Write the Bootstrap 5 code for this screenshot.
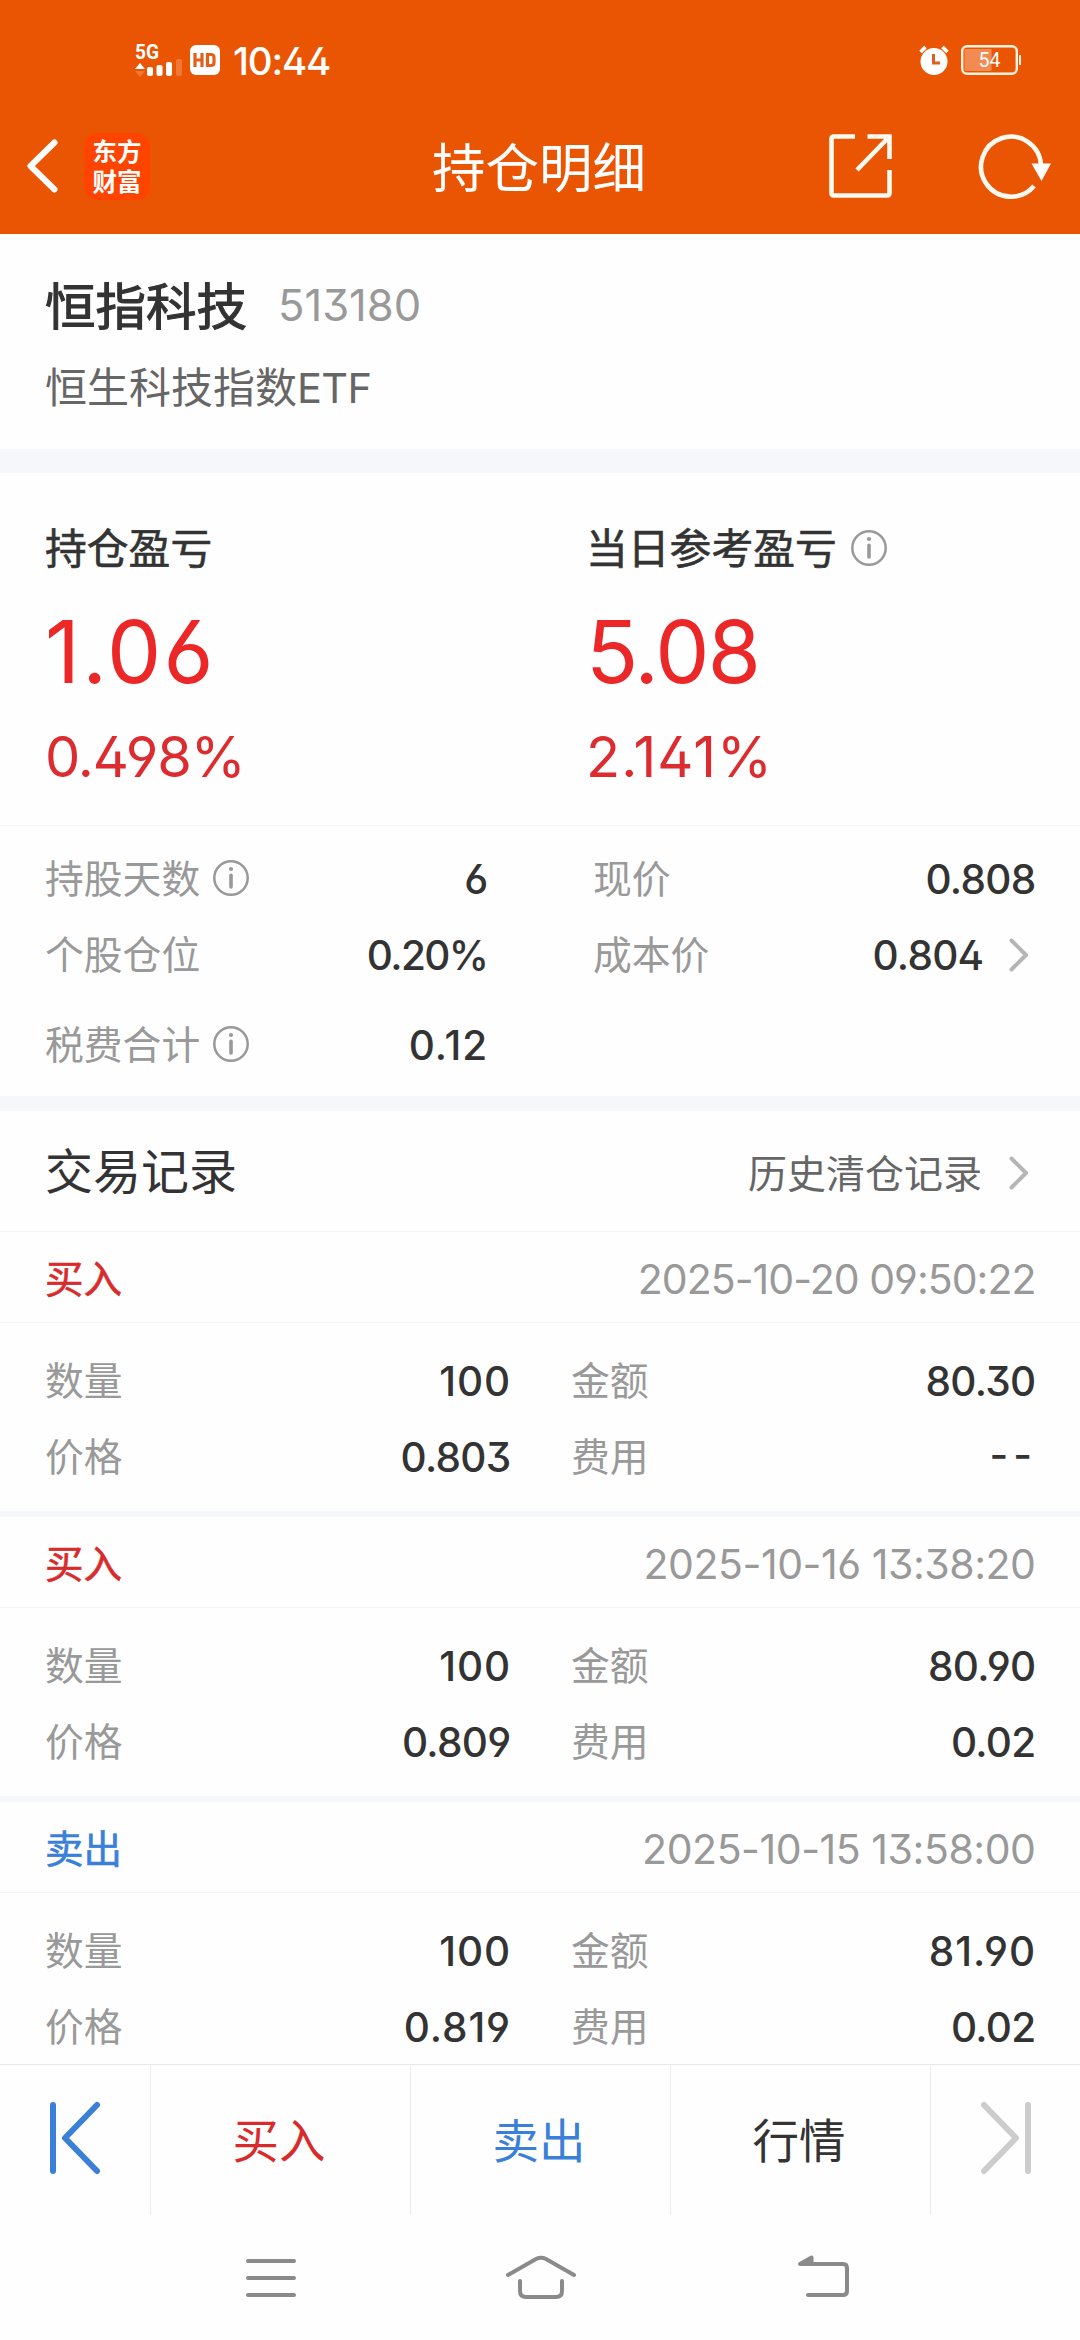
<!DOCTYPE html>
<html lang="zh-CN">
<head>
<meta charset="utf-8">
<meta name="viewport" content="width=device-width, initial-scale=1">
<title>持仓明细</title>
<link href="https://cdn.jsdelivr.net/npm/bootstrap@5.3.0/dist/css/bootstrap.min.css" rel="stylesheet">
<style>
  :root { --ink:#333; --mid:#666; --soft:#999; --up:#eb2727; --down:#3a80d8; --band:#f6f7fa; --hair:#f5f5f6; }
  body { font-family: Roboto, "Noto Sans CJK SC", sans-serif; color: var(--ink); background:#fefefe; line-height:1; overflow:hidden; }
  .screen { width:1080px; height:2340px; overflow:hidden; }
  svg { display:block; flex:none; overflow:visible; }
  .px-edge { padding-left:45px; padding-right:46px; }
  .clock, .latin, .stock-code, .profit-main, .profit-rate, .num, .stamp { font-family: Inter, Roboto, sans-serif; font-feature-settings:"cv03","cv04","ss01"; }
  .top { background:#ea5504; height:234px; color:#fff; }
  .statusbar { height:100px; padding:20px 59px 0 135px; }
  .clock { font-size:38.5px; font-weight:500; margin-left:13px; letter-spacing:-1.2px; padding-top:2px; }
  .battery { margin-left:12px; }
  .side-slot { flex:1 1 0; }
  .refresh { margin-left:87px; }
  .titlebar { height:134px; padding:0 28px 2px 26px; }
  .titlebar h1 { font-size:53.5px; font-weight:400; line-height:1; margin:0; padding-top:7px; }
  .brand-tile { width:66px; height:67px; border-radius:13px; background:#ff4400; font:700 24.5px/30px "Noto Sans CJK SC",sans-serif; margin-left:26px; padding-top:3px; }
  .stock { height:215px; padding-top:49px; }
  .stock-line { height:50px; }
  .stock-name { font-size:50.5px; -webkit-text-stroke:1.1px currentColor; }
  .stock-code { font-size:43.5px; color:var(--soft); margin-left:31px; letter-spacing:0; margin-top:-4px; }
  .stock-full { font-size:42px; color:var(--mid); height:63px; }
  .latin { font-size:41.5px; letter-spacing:-.6px; }
  .band { background:var(--band); height:24px; }
  .band-md { height:15px; }
  .band-sm { height:6px; }
  .hair { background:var(--hair); height:1px; }
  .profit { height:352px; padding-top:44px; }
  .w-left { width:541px; }
  .profit-label { font-size:41.8px; height:65px; -webkit-text-stroke:.6px currentColor; gap:14px; }
  .profit-label .info { margin-top:-4px; }
  .profit-main { font-size:86px; color:var(--up); height:90px; margin-top:25px; letter-spacing:-1.7px; }
  .profit-main.open { letter-spacing:2.2px; }
  .profit-rate { font-size:56px; color:#dd2c2f; height:60px; margin-top:30px; letter-spacing:-1.1px; }
  .profit-rate.open { letter-spacing:1px; }
  .details { height:270px; padding-top:15px; }
  .kv { height:76px; font-size:38.8px; color:var(--soft); }
  .kv-last { height:104px; }
  .kv .info { margin-left:13px; margin-top:-4px; }
  .kv > span:first-child { padding-top:2px; }
  .num { font-size:40.5px; font-weight:500; color:var(--ink); letter-spacing:-.7px; margin-right:-1.5px; padding-top:2px; }
  .num.open { letter-spacing:.9px; margin-right:-2px; }
  .num.tight { letter-spacing:-1.6px; }
  .num.dashes { letter-spacing:5px; padding-top:0; margin-right:-3px; margin-top:-3px; }
  .col-l { width:441px; }
  .col-r { width:441px; }
  .list-head { height:120px; font-size:48px; padding-top:4px; }
  .list-head .more { font-size:39px; color:var(--mid); }
  .list-head .more span { padding-top:4px; }
  .list-head .arrow { margin-top:-1px; }
  .arrow { margin-left:27px; margin-right:5px; }
  .trade-head { height:90px; font-size:38.5px; padding-top:5px; }
  .side { -webkit-text-stroke:.6px currentColor; padding-top:1px; }
  .buy { color:#d82b2b; }
  .sell { color:var(--down); }
  .stamp { font-size:41px; color:var(--soft); letter-spacing:-.97px; margin-right:-1.5px; }
  .stamp.open { letter-spacing:-.45px; }
  .trade-body { height:188px; padding-top:20px; }
  .trade-l { width:464px; }
  .trade-r { width:463px; }
  .ledger { height:832px; overflow:hidden; }
  .actions { height:151px; border-top:1px solid #e9e9ea; font-size:46.5px; }
  .actions > * + * { border-left:1px solid #ececed; }
  .actions > * { padding-bottom:4px; }
  .act-end { width:150px; }
  .act-mid { width:260px; padding-right:3px; }
  .act-mid > span { padding-top:9px; }
  .sysnav { height:125px; }
  .info { color:var(--soft); }
</style>
</head>
<body>
<svg width="0" height="0" class="position-absolute">
  <symbol id="i-info" viewBox="0 0 36 36"><circle cx="18" cy="18" r="16.700" fill="none" stroke="currentColor" stroke-width="2.500"/><circle cx="18" cy="9" r="2.100" fill="currentColor"/><path d="M18 15.200V27" stroke="currentColor" stroke-width="3.600" stroke-linecap="round"/></symbol>
  <symbol id="i-right" viewBox="0 0 20 34"><path d="M2.500 2.500 17 17 2.500 31.500" fill="none" stroke="#b5b5b5" stroke-width="4" stroke-linecap="round" stroke-linejoin="round"/></symbol>
</svg>
<div class="screen d-flex flex-column">
  <header class="top">
    <div class="statusbar d-flex align-items-center">
      <svg width="47" height="36" viewBox="0 -2 47 36"><text x="0" y="15" font-family="Roboto" font-weight="700" font-size="20" textLength="24" lengthAdjust="spacingAndGlyphs" fill="#fff">5G</text><path d="M0 25l5-6 5 6z" fill="#fff"/><path d="M0 27l5 6 5-6z" fill="#f07836"/><g fill="#fff"><rect x="12" y="23" width="6" height="9" rx="2"/><rect x="21.500" y="21" width="6" height="11" rx="2"/><rect x="31" y="18" width="6" height="14" rx="2"/></g><rect x="41" y="15" width="6" height="17" rx="2" fill="#f07836"/></svg>
      <svg class="ms-2" width="30" height="30" viewBox="0 0 30 30"><rect width="30" height="30" rx="6" fill="#fff"/><path d="M5 8v14M12 8v14M5 15h7M17.500 9.500H21q3 0 3 3v5q0 3-3 3h-3.500z" fill="none" stroke="#e0601c" stroke-width="3.200"/></svg>
      <span class="clock">10:44</span>
      <svg class="ms-auto" width="30" height="30" viewBox="0 0 30 30"><circle cx="15" cy="16.500" r="13.500" fill="#fff"/><path d="M1.500 7 6.500 2M28.500 7 23.500 2" stroke="#fff" stroke-width="3.600"/><path d="M14.500 9v9H21" fill="none" stroke="#d9621f" stroke-width="3"/></svg>
      <svg class="battery" width="60" height="30" viewBox="0 0 60 30"><rect x="1.200" y="1.200" width="54.600" height="27.600" rx="5" fill="none" stroke="#fff3e0" stroke-width="2.400"/><rect x="3.500" y="4" width="27" height="22" rx="1" fill="#f28b52"/><rect x="58" y="10" width="2" height="10" fill="#fff3e0"/><text x="28.500" y="22" text-anchor="middle" font-family="Roboto" font-size="19.500" fill="#fff">54</text></svg>
    </div>
    <nav class="titlebar d-flex align-items-center">
      <div class="side-slot d-flex align-items-center">
        <svg width="32" height="54" viewBox="0 0 32 54"><path d="M28.500 3.500 4.500 27 28.500 50.500" fill="none" stroke="#fff" stroke-width="6" stroke-linecap="round" stroke-linejoin="round"/></svg>
        <div class="brand-tile text-center">东方<br>财富</div>
      </div>
      <h1>持仓明细</h1>
      <div class="side-slot d-flex align-items-center justify-content-end">
        <svg width="64" height="64" viewBox="0 0 64 64"><path d="M26 2.500H5Q2.500 2.500 2.500 5V59q0 2.500 2.500 2.500H58q2.500 0 2.500-2.500V36M38.500 2.500H60.500V25M60.500 2.500 28 36" fill="none" stroke="#fffaf0" stroke-width="4.600"/></svg>
        <svg class="refresh" width="72" height="66" viewBox="0 0 72 66"><path d="M54 53A30 30 0 1 1 61 32" fill="none" stroke="#fffaf0" stroke-width="4.600"/><path d="M51.500 30.500H71L61.500 48z" fill="#fff"/></svg>
      </div>
    </nav>
  </header>

  <section class="stock px-edge">
    <div class="stock-line d-flex align-items-center"><span class="stock-name">恒指科技</span><span class="stock-code">513180</span></div>
    <div class="stock-full d-flex align-items-center mt-4">恒生科技指数<span class="latin">ETF</span></div>
  </section>
  <div class="band"></div>

  <section class="profit px-edge d-flex">
    <div class="w-left">
      <div class="profit-label d-flex align-items-center">持仓盈亏</div>
      <div class="profit-main open d-flex align-items-center">1.06</div>
      <div class="profit-rate d-flex align-items-center">0.498%</div>
    </div>
    <div>
      <div class="profit-label d-flex align-items-center">当日参考盈亏<svg class="info" width="36" height="36"><use href="#i-info"/></svg></div>
      <div class="profit-main d-flex align-items-center">5.08</div>
      <div class="profit-rate open d-flex align-items-center">2.141%</div>
    </div>
  </section>
  <div class="hair"></div>

  <section class="details px-edge d-flex justify-content-between">
    <div class="col-l">
      <div class="kv d-flex align-items-center justify-content-between"><span class="d-flex align-items-center">持股天数<svg class="info" width="36" height="36"><use href="#i-info"/></svg></span><span class="num">6</span></div>
      <div class="kv d-flex align-items-center justify-content-between"><span>个股仓位</span><span class="num tight">0.20%</span></div>
      <div class="kv kv-last d-flex align-items-center justify-content-between"><span class="d-flex align-items-center">税费合计<svg class="info" width="36" height="36"><use href="#i-info"/></svg></span><span class="num open">0.12</span></div>
    </div>
    <div class="col-r">
      <div class="kv d-flex align-items-center justify-content-between"><span>现价</span><span class="num">0.808</span></div>
      <div class="kv d-flex align-items-center"><span class="me-auto">成本价</span><span class="num">0.804</span><svg class="arrow" width="20" height="34"><use href="#i-right"/></svg></div>
    </div>
  </section>
  <div class="band band-md"></div>

  <div class="list-head px-edge d-flex align-items-center justify-content-between"><span>交易记录</span><span class="more d-flex align-items-center"><span>历史清仓记录</span><svg class="arrow" width="20" height="34"><use href="#i-right"/></svg></span></div>
  <div class="hair"></div>

  <main class="ledger">
    <article>
      <div class="trade-head px-edge d-flex align-items-center justify-content-between"><span class="side buy">买入</span><span class="stamp">2025-10-20 09:50:22</span></div>
      <div class="hair"></div>
      <div class="trade-body px-edge d-flex justify-content-between">
        <div class="trade-l">
          <div class="kv d-flex align-items-center justify-content-between"><span>数量</span><span class="num open">100</span></div>
          <div class="kv d-flex align-items-center justify-content-between"><span>价格</span><span class="num">0.803</span></div>
        </div>
        <div class="trade-r">
          <div class="kv d-flex align-items-center justify-content-between"><span>金额</span><span class="num">80.30</span></div>
          <div class="kv d-flex align-items-center justify-content-between"><span>费用</span><span class="num dashes">--</span></div>
        </div>
      </div>
      <div class="band band-sm"></div>
    </article>
    <article>
      <div class="trade-head px-edge d-flex align-items-center justify-content-between"><span class="side buy">买入</span><span class="stamp open">2025-10-16 13:38:20</span></div>
      <div class="hair"></div>
      <div class="trade-body px-edge d-flex justify-content-between">
        <div class="trade-l">
          <div class="kv d-flex align-items-center justify-content-between"><span>数量</span><span class="num open">100</span></div>
          <div class="kv d-flex align-items-center justify-content-between"><span>价格</span><span class="num">0.809</span></div>
        </div>
        <div class="trade-r">
          <div class="kv d-flex align-items-center justify-content-between"><span>金额</span><span class="num">80.90</span></div>
          <div class="kv d-flex align-items-center justify-content-between"><span>费用</span><span class="num">0.02</span></div>
        </div>
      </div>
      <div class="band band-sm"></div>
    </article>
    <article>
      <div class="trade-head px-edge d-flex align-items-center justify-content-between"><span class="side sell">卖出</span><span class="stamp open">2025-10-15 13:58:00</span></div>
      <div class="hair"></div>
      <div class="trade-body px-edge d-flex justify-content-between">
        <div class="trade-l">
          <div class="kv d-flex align-items-center justify-content-between"><span>数量</span><span class="num open">100</span></div>
          <div class="kv d-flex align-items-center justify-content-between"><span>价格</span><span class="num open">0.819</span></div>
        </div>
        <div class="trade-r">
          <div class="kv d-flex align-items-center justify-content-between"><span>金额</span><span class="num open">81.90</span></div>
          <div class="kv d-flex align-items-center justify-content-between"><span>费用</span><span class="num">0.02</span></div>
        </div>
      </div>
    </article>
  </main>

  <div class="actions d-flex">
    <div class="act-end d-flex align-items-center justify-content-center"><svg width="52" height="74" viewBox="0 0 52 74"><path d="M4 4V70M48 4 16 37 48 70" fill="none" stroke="#3a80d8" stroke-width="6" stroke-linecap="round" stroke-linejoin="round"/></svg></div>
    <div class="act-mid d-flex align-items-center justify-content-center buy"><span>买入</span></div>
    <div class="act-mid d-flex align-items-center justify-content-center sell"><span>卖出</span></div>
    <div class="act-mid d-flex align-items-center justify-content-center"><span>行情</span></div>
    <div class="act-end d-flex align-items-center justify-content-center"><svg width="52" height="74" viewBox="0 0 52 74"><path d="M48 4V70M4 4 36 37 4 70" fill="none" stroke="#ccc" stroke-width="6" stroke-linecap="round" stroke-linejoin="round"/></svg></div>
  </div>
  <div class="sysnav d-flex align-items-center justify-content-center">
    <svg width="620" height="50" viewBox="230 2252 620 50" fill="none" stroke="#8a8a8a" stroke-width="4" stroke-linecap="round" stroke-linejoin="round">
      <path d="M248 2260H294M248 2277H294M248 2294H294"/>
      <path d="M508 2274 536 2258Q541 2255.500 546 2258L574 2274M520 2280V2290Q520 2296 526 2296H556Q562 2296 562 2290V2280"/>
      <path d="M808 2294H843Q847 2294 847 2290V2267Q847 2263 843 2263H802"/>
      <path d="M800 2263 811.500 2256.500V2263Z" fill="#8a8a8a"/>
    </svg>
  </div>
</div>
<script src="https://cdn.jsdelivr.net/npm/bootstrap@5.3.0/dist/js/bootstrap.bundle.min.js"></script>
</body>
</html>
